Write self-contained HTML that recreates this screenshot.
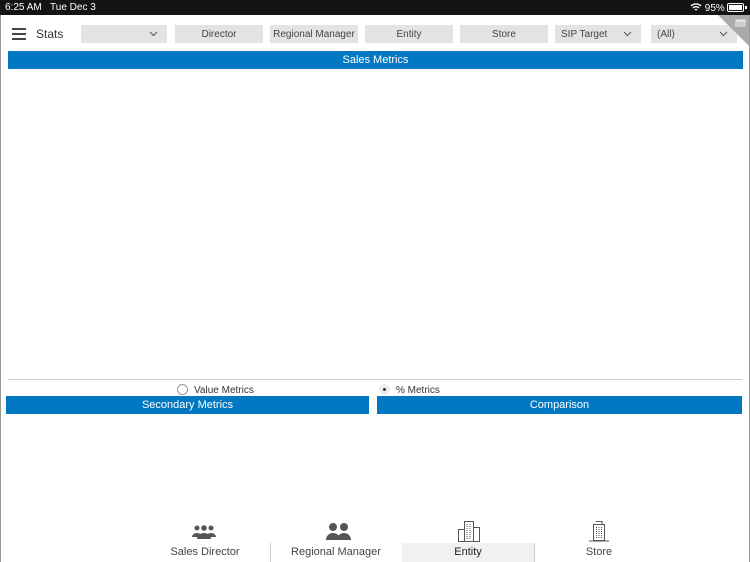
<!DOCTYPE html>
<html><head><meta charset="utf-8"><style>
*{margin:0;padding:0;box-sizing:border-box}
body{width:750px;height:562px;background:#fff;font-family:"Liberation Sans",Arial,sans-serif;position:relative;overflow:hidden;color:#333}
.sb{position:absolute;left:0;top:0;width:750px;height:15px;background:#141414;color:#fff;font-size:10px}
.page{position:absolute;left:0;top:15px;width:750px;height:547px;border-left:1px solid #999;border-right:1px solid #999}
.box{position:absolute;top:25px;height:18px;background:#e3e3e3;font-size:10px;color:#444;text-align:center;line-height:19px}
.chev{position:absolute;right:9px;top:6px}
.bar{position:absolute;background:#0277c2;color:#fff;font-size:11px;text-align:center;line-height:19px;height:18px}
.tab{position:absolute;top:546px;font-size:11px;color:#444;text-align:center}
</style></head><body>
<div class="sb"><span style="position:absolute;left:5px;top:2px">6:25 AM&nbsp;&nbsp;&nbsp;Tue Dec 3</span>
<span style="position:absolute;left:690px;top:2px">
<svg width="12" height="10" viewBox="0 0 12 10" style="vertical-align:-1px"><path d="M1 4a7 7 0 0 1 10 0M3 6a4 4 0 0 1 6 0M5 8a1.5 1.5 0 0 1 2 0" stroke="#fff" stroke-width="1.4" fill="none"/></svg> 95%</span>
<span style="position:absolute;left:727px;top:3px;width:17px;height:9px;border:1px solid #fff;border-radius:2px;padding:1px"><span style="display:block;width:100%;height:100%;background:#fff"></span></span>
<span style="position:absolute;left:745px;top:6px;width:1.5px;height:3px;background:#fff"></span>
</div>
<div class="box" style="left:81px;width:86px"><svg class="chev" width="9" height="6"><path d="M1 1l3.5 3.5L8 1" stroke="#555" fill="none"/></svg></div>
<div class="box" style="left:175px;width:88px">Director</div>
<div class="box" style="left:270px;width:88px">Regional Manager</div>
<div class="box" style="left:365px;width:88px">Entity</div>
<div class="box" style="left:460px;width:88px">Store</div>
<div class="box" style="left:555px;width:86px;text-align:left;padding-left:6px">SIP Target<svg class="chev" width="9" height="6"><path d="M1 1l3.5 3.5L8 1" stroke="#555" fill="none"/></svg></div>
<div class="box" style="left:651px;width:86px;text-align:left;padding-left:6px">(All)<svg class="chev" width="9" height="6"><path d="M1 1l3.5 3.5L8 1" stroke="#555" fill="none"/></svg></div>
<svg style="position:absolute;left:718px;top:15px" width="32" height="32"><path d="M0 0H32V32Z" fill="#aaa"/><rect x="17" y="4" width="11" height="8" fill="#ccc"/><path d="M18 6h9" stroke="#fff"/></svg>
<div style="position:absolute;left:12px;top:28px;width:14px"><div style="height:2px;background:#444;margin-bottom:3px"></div><div style="height:2px;background:#444;margin-bottom:3px"></div><div style="height:2px;background:#444"></div></div>
<div style="position:absolute;left:36px;top:27px;font-size:12px;color:#333">Stats</div>
<div class="bar" style="left:8px;top:51px;width:735px">Sales Metrics</div>
<div style="position:absolute;left:8px;top:379px;width:734px;height:1px;background:#ccc"></div>
<div style="position:absolute;left:177px;top:384px;width:11px;height:11px;border:1px solid #999;border-radius:50%"></div>
<div style="position:absolute;left:194px;top:385px;font-size:10px">Value Metrics</div>
<div style="position:absolute;left:379px;top:384px;width:11px;height:11px;border-radius:50%;background:#eee"><div style="width:3px;height:3px;background:#333;border-radius:50%;margin:4px"></div></div>
<div style="position:absolute;left:396px;top:385px;font-size:10px">% Metrics</div>
<div class="bar" style="left:6px;top:396px;width:363px">Secondary Metrics</div>
<div class="bar" style="left:377px;top:396px;width:365px">Comparison</div>
<div style="position:absolute;left:402px;top:543px;width:132px;height:19px;background:#f1f1f1"></div>
<div style="position:absolute;left:270px;top:543px;width:1px;height:19px;background:#ccc"></div>
<div style="position:absolute;left:534px;top:543px;width:1px;height:19px;background:#ccc"></div>
<svg style="position:absolute;left:191px;top:524px" width="26" height="16" fill="#555"><circle cx="6" cy="4" r="2.5"/><circle cx="13" cy="4" r="2.8"/><circle cx="20" cy="4" r="2.5"/><path d="M1 13a5 4 0 0 1 10 0zM15 13a5 4 0 0 1 10 0zM6 15a7 6 0 0 1 14 0z"/></svg>
<svg style="position:absolute;left:326px;top:522px" width="25" height="18" fill="#555"><circle cx="7" cy="5" r="4"/><circle cx="18" cy="5" r="4"/><path d="M0 18a7 7 0 0 1 14 0zM11 18a7 7 0 0 1 14 0z"/></svg>
<svg style="position:absolute;left:457px;top:520px" width="24" height="22" fill="none" stroke="#555"><rect x="7.5" y="1.5" width="9" height="20"/><rect x="1.5" y="9.5" width="6" height="12"/><rect x="16.5" y="7.5" width="6" height="14"/><path d="M10 4v15M13 4v15" stroke-dasharray="1 1"/></svg>
<svg style="position:absolute;left:588px;top:520px" width="22" height="22" fill="none" stroke="#555"><rect x="5.5" y="4.5" width="11" height="16"/><path d="M8 1.5h6v3M1 21h20"/><path d="M8.5 7v11M11 7v11M13.5 7v11" stroke-dasharray="1 1"/></svg>
<div class="tab" style="left:160px;width:90px">Sales Director</div>
<div class="tab" style="left:280px;width:112px">Regional Manager</div>
<div class="tab" style="left:420px;width:96px;color:#222">Entity</div>
<div class="tab" style="left:560px;width:78px">Store</div>
<div class="page"></div>
</body></html>
